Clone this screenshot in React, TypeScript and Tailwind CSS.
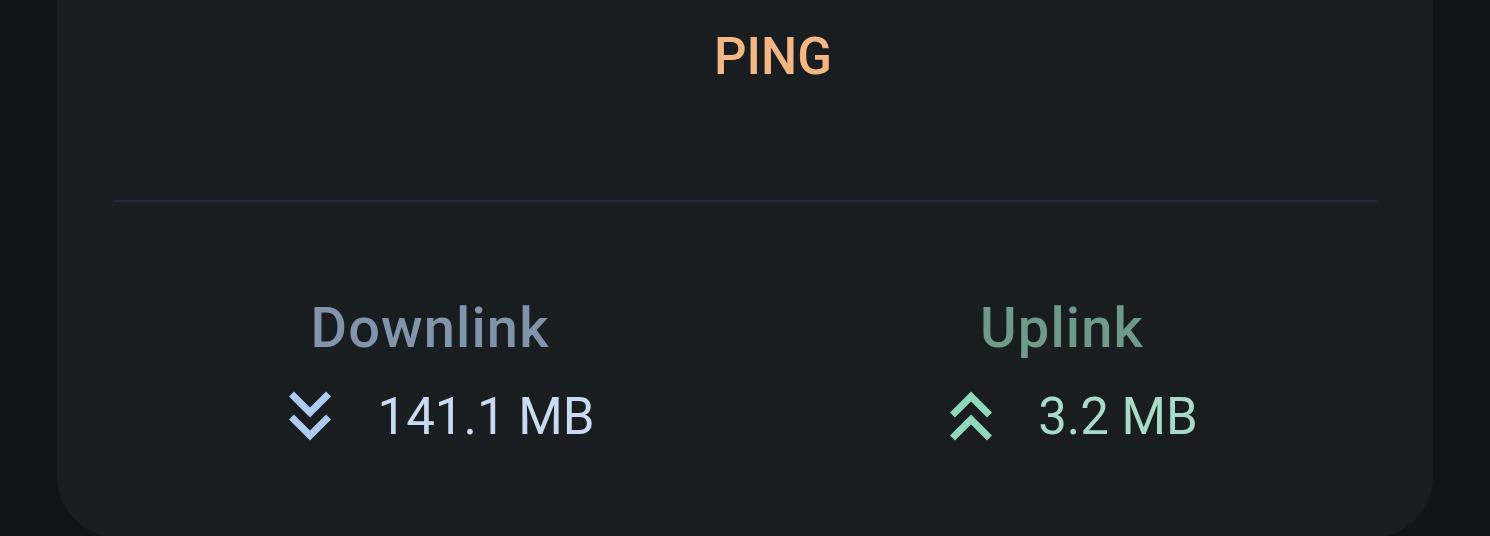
import React from "react";

function DoubleDown({ className }: { className?: string }) {
  return (
    <svg viewBox="0 0 24 24" className={className} fill="currentColor">
      <path d="M18 6.41L16.59 5 12 9.58 7.41 5 6 6.41l6 6z" />
      <path d="M18 13l-1.41-1.41L12 16.17l-4.59-4.58L6 13l6 6z" />
    </svg>
  );
}

function DoubleUp({ className }: { className?: string }) {
  return (
    <svg viewBox="0 0 24 24" className={className} fill="currentColor">
      <path d="M6 17.59L7.41 19 12 14.42 16.59 19 18 17.59l-6-6z" />
      <path d="M6 11l1.41 1.41L12 7.83l4.59 4.58L18 11l-6-6z" />
    </svg>
  );
}

export default function App() {
  return (
    <div
      className="h-[536px] w-[1490px] overflow-hidden bg-[#111417]"
      style={{ fontFamily: "Roboto, 'Noto Sans', sans-serif" }}
    >
      <div className="ml-[57px] flex h-[538px] w-[1376px] flex-col rounded-b-[62px] bg-[#1a1d20]">
        <div className="pl-[56px] pt-[31px] text-center text-[51px] font-medium leading-none text-[#f4b783]">
          PING
        </div>
        <div className="mx-14 mt-[118px] h-[2px] bg-[#242938]" />
        <div className="mx-14 mt-[98px] grid grid-cols-2">
          <div className="flex flex-col items-center">
            <div className="pl-[2px] text-[56px] font-medium leading-none tracking-[0.02em] text-[#8095ab]">
              Downlink
            </div>
            <div className="mt-[18px] flex items-center gap-[25px] pl-[5px]">
              <DoubleDown className="h-[84px] w-[84px] text-[#aecbf4]" />
              <span className="text-[51px] leading-none text-[#c8dbf0]">141.1 MB</span>
            </div>
          </div>
          <div className="flex flex-col items-center">
            <div className="pl-[2px] text-[56px] font-medium leading-none tracking-[0.02em] text-[#6e9a8a]">
              Uplink
            </div>
            <div className="mt-[18px] flex items-center gap-[25px] pl-[5px]">
              <DoubleUp className="h-[84px] w-[84px] text-[#8fd8bb]" />
              <span className="text-[51px] leading-none text-[#a8dac8]">3.2 MB</span>
            </div>
          </div>
        </div>
      </div>
    </div>
  );
}
